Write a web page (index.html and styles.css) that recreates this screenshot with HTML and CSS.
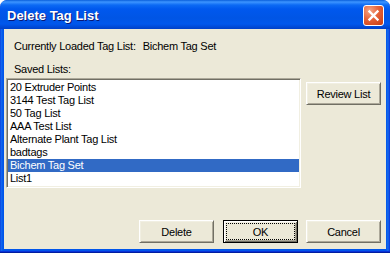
FILE: index.html
```html
<!DOCTYPE html>
<html>
<head>
<meta charset="utf-8">
<link rel="stylesheet" href="styles.css">
</head>
<body>
<div class="window">
  <div class="titlebar">
    <span class="title">Delete Tag List</span>
    <span class="close">
      <svg width="13" height="13" viewBox="0 0 13 13"><path d="M2.5 2.5 L10.5 10.5 M10.5 2.5 L2.5 10.5" stroke="#fff" stroke-width="2.4" stroke-linecap="square"/></svg>
    </span>
  </div>
  <div class="client">
    <div class="label-row">
      <span class="lbl-cur">Currently Loaded Tag List:</span>
      <span class="lbl-val">Bichem Tag Set</span>
    </div>
    <div class="label-row saved">Saved Lists:</div>
    <div class="main">
      <div class="listbox">
        <div class="item">20 Extruder Points</div>
        <div class="item">3144 Test Tag List</div>
        <div class="item">50 Tag List</div>
        <div class="item">AAA Test List</div>
        <div class="item">Alternate Plant Tag List</div>
        <div class="item">badtags</div>
        <div class="item selected">Bichem Tag Set</div>
        <div class="item">List1</div>
      </div>
      <div class="side">
        <button class="btn">Review List</button>
      </div>
    </div>
    <div class="buttons">
      <button class="btn">Delete</button>
      <button class="btn default"><span class="focus">OK</span></button>
      <button class="btn">Cancel</button>
    </div>
  </div>
</div>
</body>
</html>
```
FILE: styles.css
```css
* { box-sizing: border-box; }
html, body { margin: 0; padding: 0; background: #fff; }
body { width: 390px; height: 253px; overflow: hidden; }

.window {
  width: 390px;
  height: 253px;
  display: flex;
  flex-direction: column;
  border-radius: 7px 7px 0 0;
  overflow: hidden;
  padding: 0 4px 4px 4px;
  background: linear-gradient(to right, #0831D9 0, #166AEE 1px, #0055EA 3px, #0055EA 386px, #166AEE 388px, #0831D9 390px);
  box-shadow: inset 0 -1px #001EA0, inset 0 -2px #0831D9;
}

.titlebar {
  height: 29px;
  margin: 0 -4px;
  padding: 0 6px 0 7px;
  display: flex;
  align-items: center;
  justify-content: space-between;
  background: linear-gradient(to bottom, #0A5FDB 0, #3D95FF 2px, #0C6AF4 5px, #0058EE 9px, #0055E5 18px, #0057EC 24px, #0049D6 27px, #0040C8 29px);
  border-radius: 7px 7px 0 0;
}
.title {
  font-family: "Liberation Sans", Arial, sans-serif;
  font-weight: bold;
  font-size: 13px;
  color: #fff;
  text-shadow: 1px 1px 0 #0A1874;
  padding-top: 2px;
}
.close {
  width: 21px;
  height: 21px;
  margin-top: 1px;
  border: 1px solid #fff;
  border-radius: 3px;
  background: radial-gradient(circle at 30% 25%, #F4A585 0, #E5633A 45%, #D34A1F 80%, #C23C12 100%);
  display: flex;
  align-items: center;
  justify-content: center;
}
.close svg { display: block; }

.client {
  flex: 1;
  background: #ECE9D8;
  padding: 11px 5px 6px 2px;
  display: flex;
  flex-direction: column;
  font-family: "Liberation Sans", Arial, sans-serif;
  font-size: 11px;
  color: #000;
}
.label-row {
  height: 13px;
  line-height: 13px;
  padding-left: 8px;
  display: flex;
  letter-spacing: -0.25px;
}
.lbl-val { margin-left: 7px; }
.saved { margin-top: 10px; }

.main {
  display: flex;
  margin-top: 2px;
  gap: 5px;
  align-items: flex-start;
}
.listbox {
  width: 296px;
  height: 110px;
  background: #fff;
  border: 1px solid;
  border-color: #ACA899 #fff #fff #ACA899;
  box-shadow: inset 1px 1px #716F64, inset -1px -1px #F1EFE2;
  padding: 2px 1px 1px 1px;
}
.item {
  height: 13px;
  line-height: 13px;
  padding-left: 2px;
  letter-spacing: -0.25px;
  white-space: nowrap;
}
.item.selected {
  background: #316AC5;
  color: #fff;
}
.side { padding-top: 4px; }

.btn {
  width: 75px;
  height: 23px;
  padding: 0;
  margin: 0;
  font-family: "Liberation Sans", Arial, sans-serif;
  font-size: 11px;
  letter-spacing: -0.25px;
  color: #000;
  background: #ECE9D8;
  border: 1px solid;
  border-color: #fff #716F64 #716F64 #fff;
  box-shadow: inset 1px 1px #F1EFE2, inset -1px -1px #ACA899;
  border-radius: 0;
}
.btn.default {
  border: 1px solid #000;
  box-shadow: inset 1px 1px #fff, inset -1px -1px #716F64, inset 2px 2px #F1EFE2, inset -2px -2px #ACA899;
  padding: 2px;
  display: flex;
}
.focus {
  flex: 1;
  display: flex;
  align-items: center;
  justify-content: center;
  border: 1px dotted #000;
}

.buttons {
  margin-top: auto;
  display: flex;
  justify-content: flex-end;
  gap: 9px;
}
.buttons .btn:last-child { margin-left: -1px; }
```
